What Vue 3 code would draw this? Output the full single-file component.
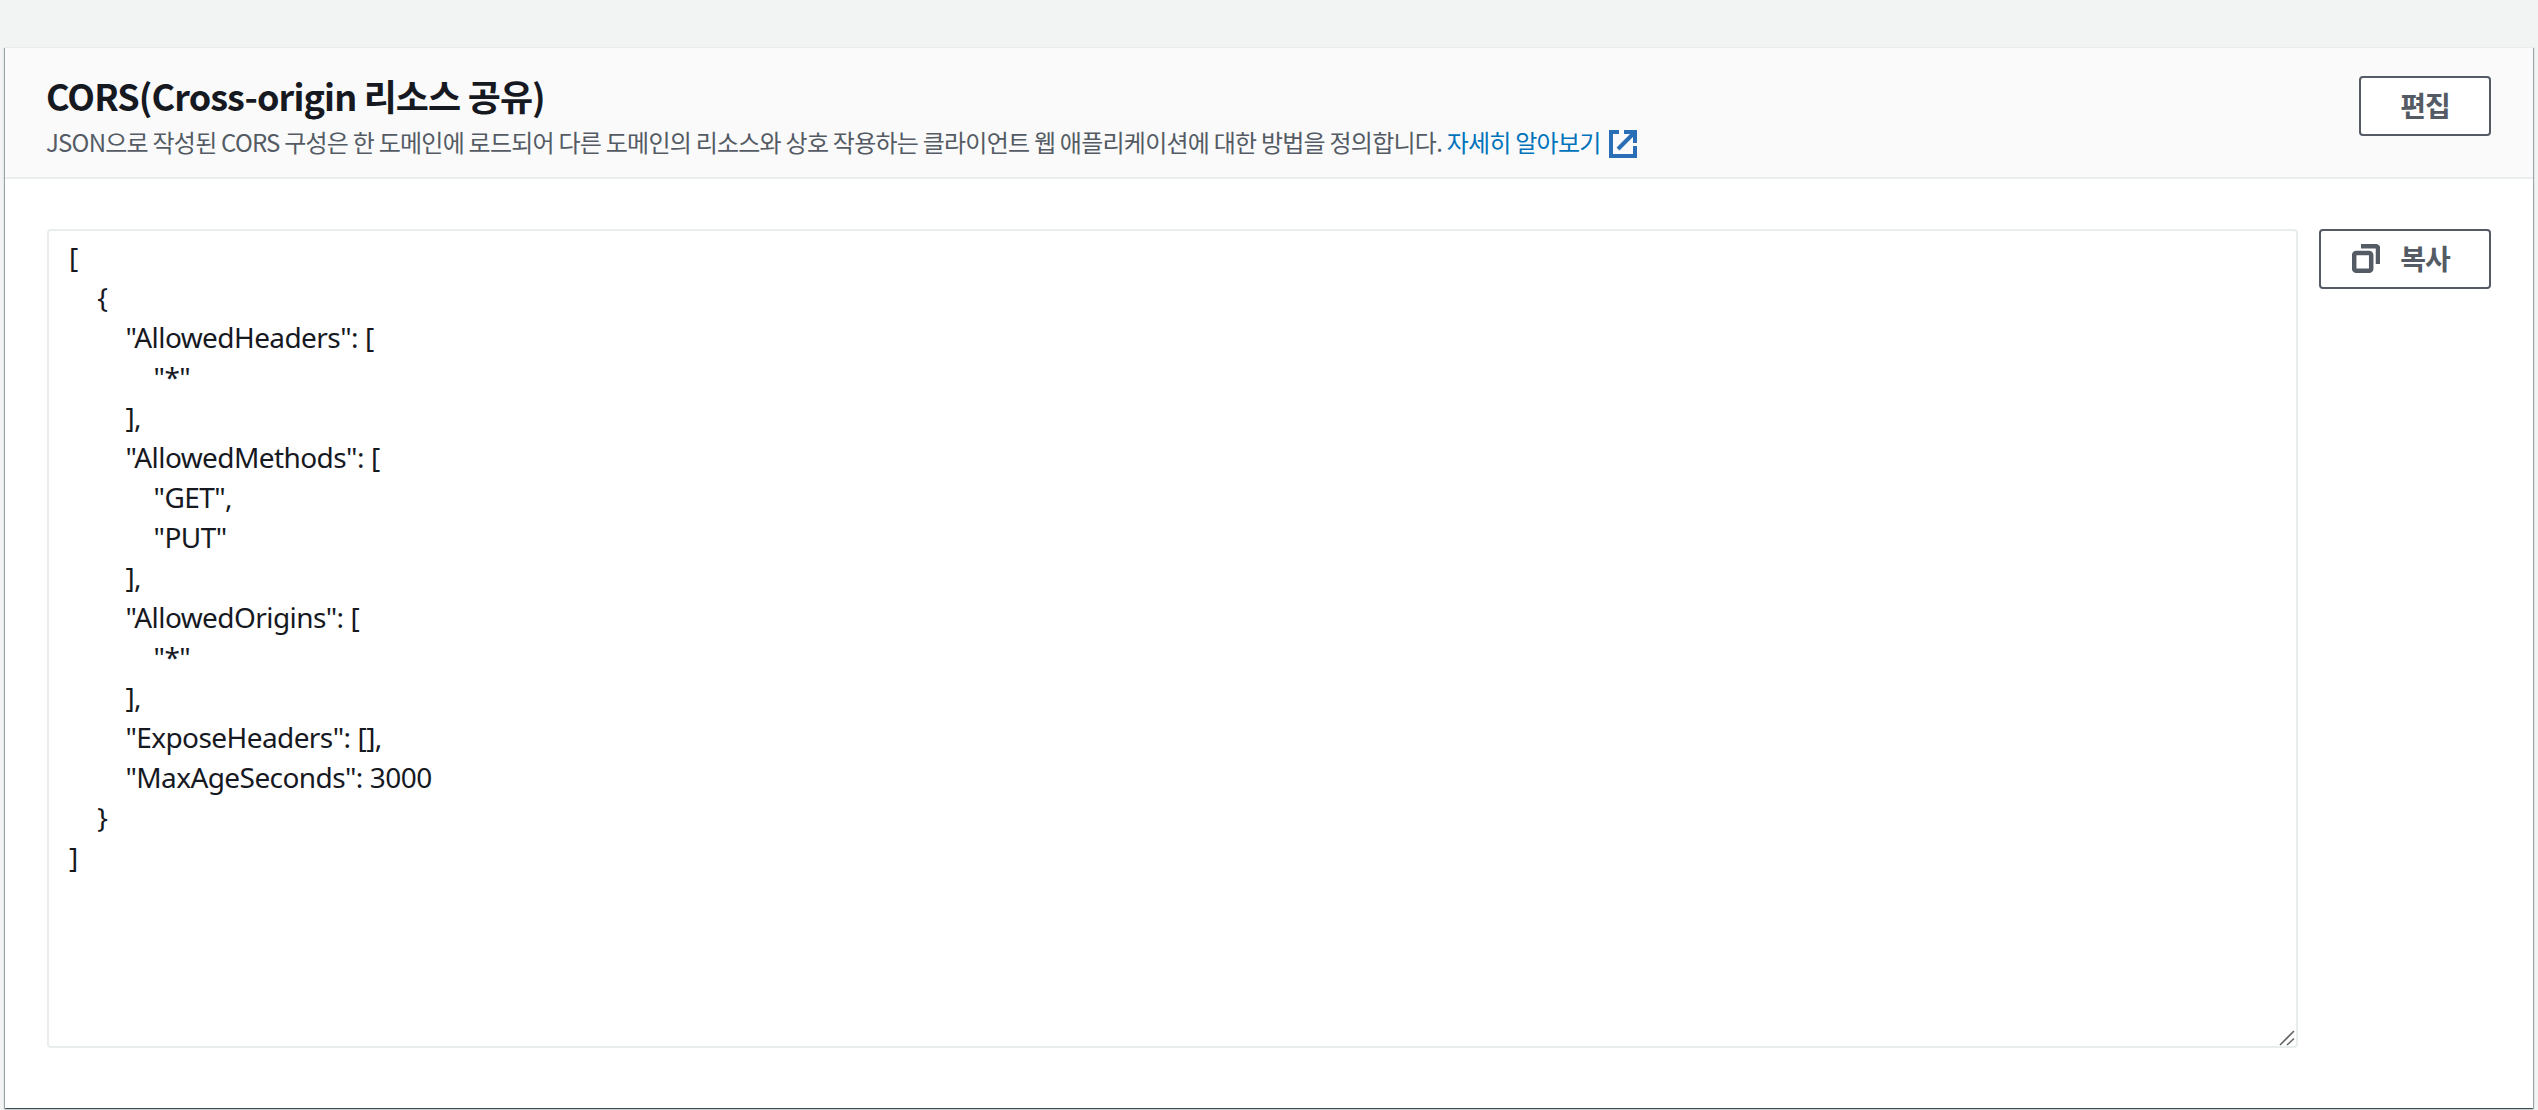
<script setup>
const json = `[
    {
        "AllowedHeaders": [
            "*"
        ],
        "AllowedMethods": [
            "GET",
            "PUT"
        ],
        "AllowedOrigins": [
            "*"
        ],
        "ExposeHeaders": [],
        "MaxAgeSeconds": 3000
    }
]`
</script>

<template>
  <div class="page">
    <section class="card">
      <header class="head">
        <div class="head-text">
          <h2 class="title">CORS(Cross-origin 리소스 공유)</h2>
          <p class="desc">JSON으로 작성된 CORS 구성은 한 도메인에 로드되어 다른 도메인의 리소스와 상호 작용하는 클라이언트 웹 애플리케이션에 대한 방법을 정의합니다. <a class="link">자세히 알아보기<svg class="ext" viewBox="0 0 28 28" width="28" height="28" fill="none" stroke="#2a6fb5" stroke-width="4"><path d="M10 2H2v24h24v-10"/><path d="M15 2h11v11M26 2 9 19"/></svg></a></p>
        </div>
        <button class="btn edit">편집</button>
      </header>
      <div class="body">
        <div class="editor">
          <pre class="code">{{ json }}</pre>
          <svg class="grip" viewBox="0 0 16 16" width="16" height="16" stroke="#666" stroke-width="1.6"><path d="M1 15 15 1M8 15l7-6.5"/></svg>
        </div>
        <button class="btn copy">
          <svg class="copy-icon" viewBox="0 0 28 29" width="28" height="29" fill="none" stroke="#545b64" stroke-width="4.5"><rect x="2.2" y="9" width="17" height="17.8" rx="2"/><path d="M9 2.2h15a2 2 0 0 1 2 2V20"/></svg>
          복사
        </button>
      </div>
    </section>
  </div>
</template>

<style scoped>
.page {
  box-sizing: border-box;
  height: 1110px;
  padding: 47px 5px 2px;
  background: #f2f3f3;
  font-family: "Noto Sans CJK KR", "Noto Sans", sans-serif;
  color: #16191f;
  overflow: hidden;
}
.card {
  box-sizing: border-box;
  height: 100%;
  display: flex;
  flex-direction: column;
  background: #fff;
  border-top: 1px solid #eaeded;
  box-shadow: 0 1px 1px 0 rgba(0, 28, 36, 0.5), 1px 1px 1px 0 rgba(0, 28, 36, 0.3), -1px 1px 1px 0 rgba(0, 28, 36, 0.3);
}
.head {
  box-sizing: border-box;
  height: 131px;
  flex: none;
  display: flex;
  justify-content: space-between;
  align-items: flex-start;
  padding: 27px 42px 0 41px;
  background: #fafafa;
  border-bottom: 2px solid #eaeded;
}
.title {
  margin: 0;
  font-size: 36px;
  line-height: 40px;
  font-weight: 700;
  letter-spacing: -0.88px;
}
.desc {
  margin: 11px 0 0;
  font-size: 24px;
  line-height: 32px;
  color: #545b64;
  letter-spacing: -0.76px;
}
.link {
  color: #0073bb;
}
.ext {
  margin-left: 8px;
  vertical-align: -6px;
}
.btn {
  box-sizing: border-box;
  height: 60px;
  border: 2px solid #545b64;
  border-radius: 4px;
  background: #fff;
  color: #545b64;
  font-family: inherit;
  font-size: 28px;
  font-weight: 700;
  letter-spacing: -1px;
  display: flex;
  align-items: center;
  justify-content: center;
  gap: 20px;
  padding: 0 0 2px;
  margin: 0;
}
.edit {
  width: 132px;
  margin-top: 1px;
}
.copy {
  width: 172px;
  flex: none;
  padding-right: 8px;
}
.copy-icon {
  flex: none;
}
.body {
  flex: 1;
  display: flex;
  align-items: flex-start;
  gap: 21px;
  padding: 50px 42px 0 42px;
}
.editor {
  position: relative;
  flex: 1;
}
.code {
  box-sizing: border-box;
  height: 819px;
  margin: 0;
  padding: 6px 20px;
  border: 2px solid #eaeded;
  border-radius: 4px;
  font-family: "Noto Sans", "Noto Sans CJK KR", sans-serif;
  font-size: 28px;
  line-height: 40px;
  letter-spacing: -0.58px;
  word-spacing: 0.35px;
  color: #16191f;
  overflow: hidden;
  white-space: pre;
}
.grip {
  position: absolute;
  right: 3px;
  bottom: 2px;
}
</style>

<style>
html, body { margin: 0; background: #f2f3f3; }
</style>
